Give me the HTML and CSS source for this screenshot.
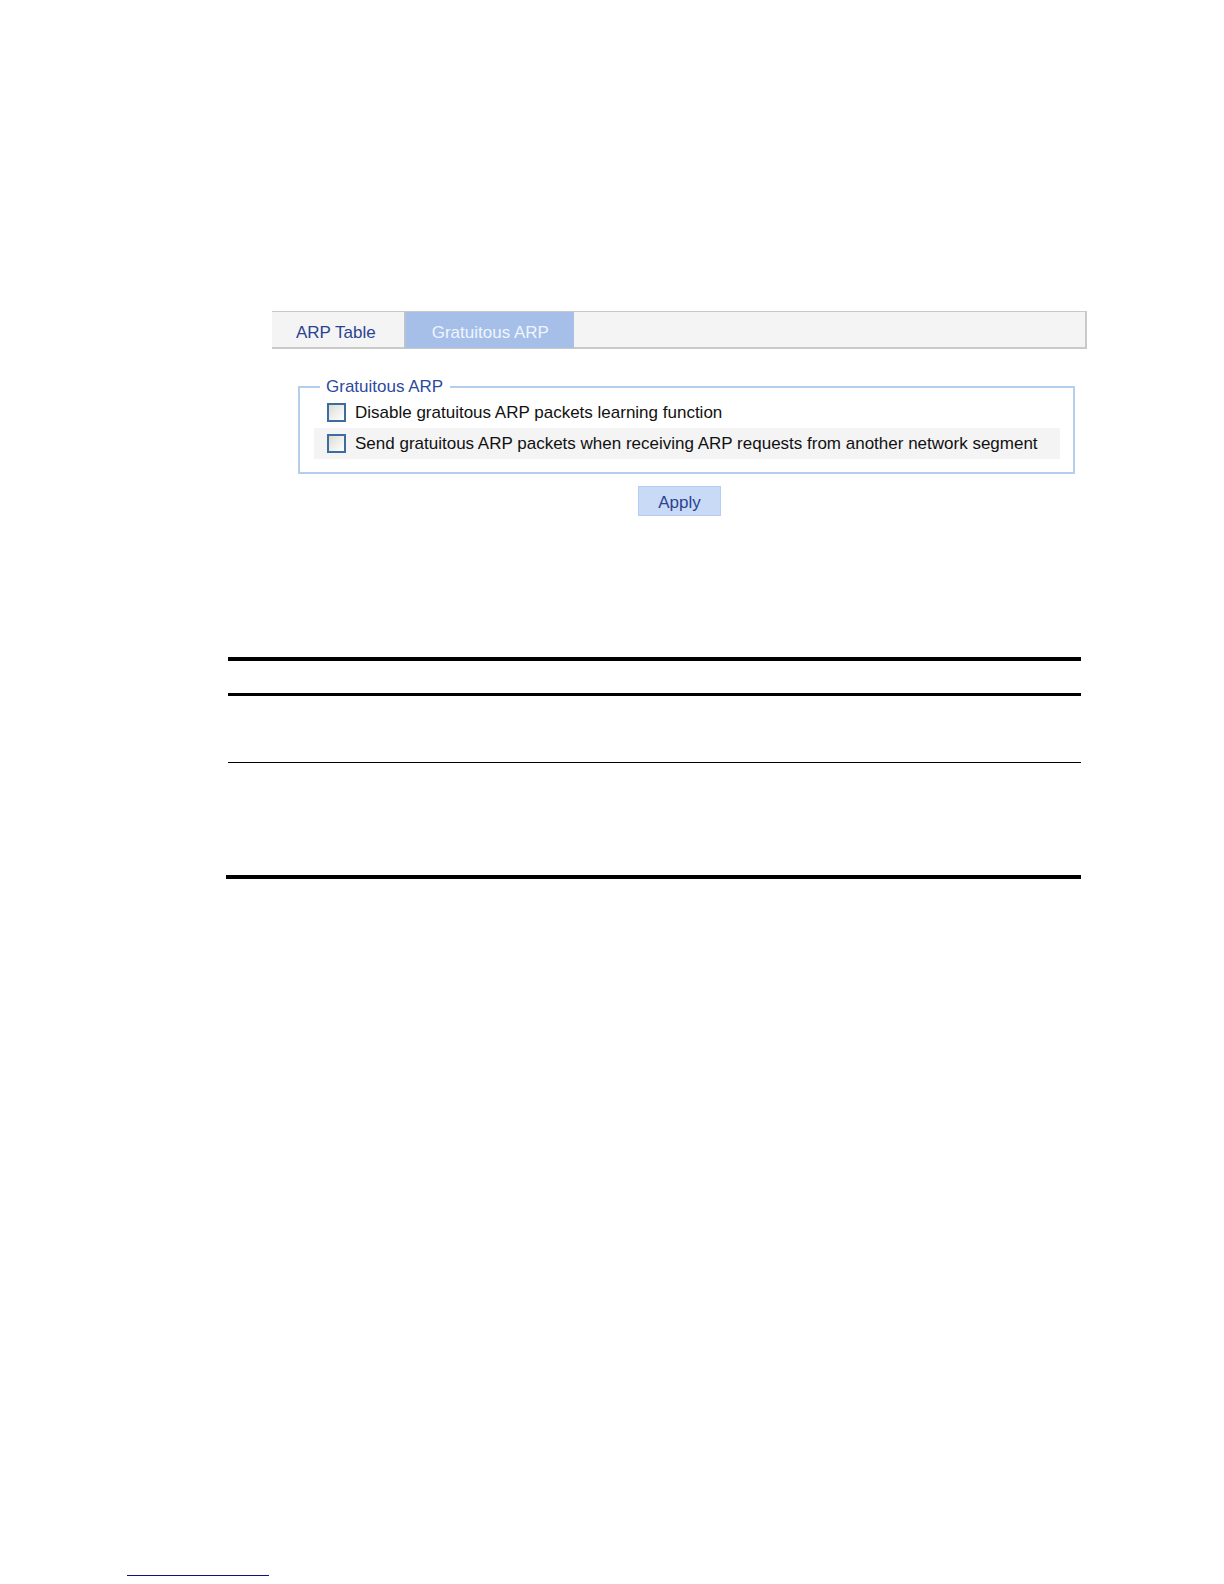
FILE: index.html
```html
<!DOCTYPE html>
<html lang="en">
<head>
<meta charset="utf-8">
<title>Gratuitous ARP</title>
<link rel="stylesheet" href="styles.css">
</head>
<body>
<main class="page">
  <section class="panel">
    <nav class="tabs">
      <a class="tab" href="#table">ARP Table</a>
      <a class="tab tab-active" href="#gratuitous" aria-current="page">Gratuitous ARP</a>
    </nav>
    <form class="settings">
      <fieldset class="group">
        <legend class="group-title">Gratuitous ARP</legend>
        <label class="option"><input class="check" type="checkbox">Disable gratuitous ARP packets learning function</label>
        <label class="option option-shaded"><input class="check" type="checkbox">Send gratuitous ARP packets when receiving ARP requests from another network segment</label>
      </fieldset>
      <button class="apply" type="button">Apply</button>
    </form>
  </section>
  <div class="items">
    <table class="items-table">
      <thead><tr class="row-head"><th></th><th></th></tr></thead>
      <tbody>
        <tr class="row-short"><td></td><td></td></tr>
        <tr class="row-tall"><td></td><td></td></tr>
      </tbody>
    </table>
  </div>
  <footer class="footer"><hr class="footer-rule"></footer>
</main>
</body>
</html>
```
FILE: styles.css
```css
* { box-sizing: border-box; }

body {
  margin: 0;
  background: #fff;
  color: #111;
  font: 17px/20px "Liberation Sans", Arial, sans-serif;
}

.page {
  display: flex;
  flex-direction: column;
  min-height: 100vh;
  padding: 311px 0 8px;
}

.panel { margin: 0 137px 0 272px; }

.tabs {
  display: flex;
  height: 38px;
  background: #f4f4f4;
  border: solid #c9c9c9;
  border-width: 1px 2px 2px 0;
}

.tab {
  display: flex;
  align-items: center;
  padding: 6px 28px 0 24px;
  color: #2b4490;
  text-decoration: none;
}

.tab-active {
  padding: 6px 25px 0 26px;
  margin-bottom: -1px;
  background: #a5bfe8;
  border-left: 2px solid #bcc3cf;
  color: #eff5ff;
}

.settings {
  display: flex;
  flex-direction: column;
  padding-top: 28px;
}

.group {
  min-width: 0;
  margin: 0 12px 0 26px;
  padding: 0 13px 13px 14px;
  border: 2px solid #b5cfeb;
}

.group-title {
  margin-left: 6px;
  padding: 0 7px 0 6px;
  color: #2b4aa0;
}

.option {
  display: flex;
  align-items: center;
  gap: 9px;
  height: 31px;
  padding-left: 13px;
}

.option-shaded { background: #f4f4f4; }

.check {
  appearance: none;
  flex: none;
  width: 19px;
  height: 19px;
  margin: 0;
  border: 2px solid #3d6c9e;
  background: linear-gradient(135deg, #dcdcd6, #fff);
}

.check:checked { background: #3d6c9e; }

.apply {
  align-self: center;
  width: 83px;
  height: 30px;
  margin: 12px 0 0;
  padding: 4px 0 0;
  border: 1px solid #b4cdf0;
  background: #c9daf6;
  color: #2b4490;
  font: inherit;
}

.items {
  margin: 141px 143px 0 226px;
  padding-left: 2px;
  border-bottom: 4px solid #000;
}

.items-table {
  width: 100%;
  border-spacing: 0;
  border-top: 4px solid #000;
}

.items-table th,
.items-table td { padding: 0; }

.row-head th { height: 35px; border-bottom: 3px solid #000; }
.row-short td { height: 67px; border-bottom: 1px solid #000; }
.row-tall td { height: 112px; }

.footer {
  margin-top: auto;
  padding-left: 127px;
}

.footer-rule {
  width: 142px;
  margin: 0;
  border: 0;
  border-top: 1px solid #10108c;
}
```
